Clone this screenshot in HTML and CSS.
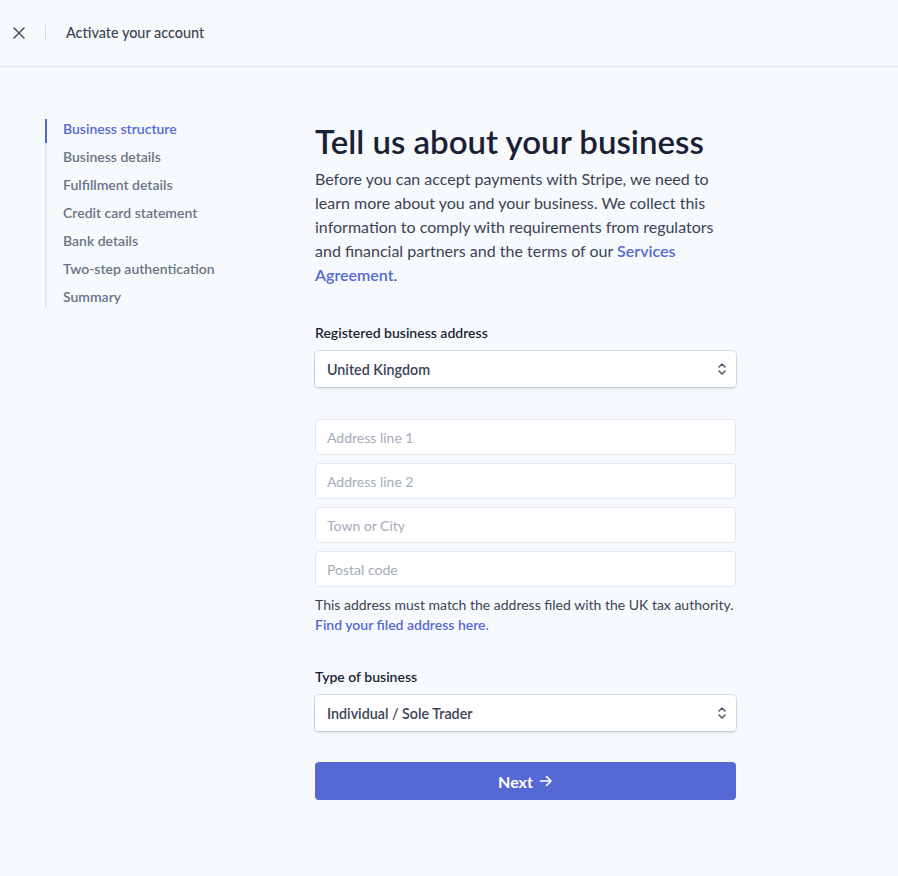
FILE: index.html
```html
<!DOCTYPE html>
<html lang="en">
<head>
<meta charset="utf-8">
<title>Activate your account</title>
<link rel="stylesheet" href="styles.css">
</head>
<body>
<header class="topbar">
  <button class="close" aria-label="Close">
    <svg width="12" height="12" viewBox="0 0 12 12"><path d="M1 1L11 11M11 1L1 11" stroke="#4f566b" stroke-width="1.6" stroke-linecap="round"/></svg>
  </button>
  <span class="divider"></span>
  <span class="title">Activate your account</span>
</header>
<div class="layout">
  <nav class="steps">
    <a class="step active">Business structure</a>
    <a class="step">Business details</a>
    <a class="step">Fulfillment details</a>
    <a class="step">Credit card statement</a>
    <a class="step">Bank details</a>
    <a class="step">Two-step authentication</a>
    <a class="step">Summary</a>
  </nav>
  <main class="content">
    <h1>Tell us about your business</h1>
    <p class="intro">Before you can accept payments with Stripe, we need to learn more about you and your business. We collect this information to comply with requirements from regulators and financial partners and the terms of our <a class="link">Services Agreement</a>.</p>

    <div class="field">
      <label class="label">Registered business address</label>
      <div class="select">
        <span>United Kingdom</span>
        <svg width="10" height="14" viewBox="0 0 10 14"><path d="M2 5L5 2L8 5M2 9L5 12L8 9" fill="none" stroke="#4f566b" stroke-width="1.5" stroke-linecap="round" stroke-linejoin="round"/></svg>
      </div>
    </div>

    <div class="inputs">
      <div class="input">Address line 1</div>
      <div class="input">Address line 2</div>
      <div class="input">Town or City</div>
      <div class="input">Postal code</div>
    </div>
    <p class="help">This address must match the address filed with the UK tax authority.<br><a class="link">Find your filed address here.</a></p>

    <div class="field field-type">
      <label class="label">Type of business</label>
      <div class="select">
        <span>Individual / Sole Trader</span>
        <svg width="10" height="14" viewBox="0 0 10 14"><path d="M2 5L5 2L8 5M2 9L5 12L8 9" fill="none" stroke="#4f566b" stroke-width="1.5" stroke-linecap="round" stroke-linejoin="round"/></svg>
      </div>
    </div>

    <button class="next">Next
      <svg width="14" height="14" viewBox="0 0 14 14"><path d="M1.5 7H12M7.5 2.5L12 7L7.5 11.5" fill="none" stroke="#fff" stroke-width="1.6" stroke-linecap="round" stroke-linejoin="round"/></svg>
    </button>
  </main>
</div>
</body>
</html>
```
FILE: styles.css
```css
* { box-sizing: border-box; }
html, body { margin: 0; padding: 0; }
body {
  background: #f7fafc;
  font-family: "Segoe UI", Lato, "Noto Sans", sans-serif;
  color: #3c4257;
  width: 898px;
  height: 876px;
  overflow: hidden;
}
.topbar {
  height: 67px;
  border-bottom: 1px solid #e3e8ee;
  display: flex;
  align-items: center;
  padding-bottom: 1px;
}
.close {
  background: none;
  border: 0;
  padding: 0;
  margin-left: 13px;
  width: 12px;
  height: 12px;
  display: flex;
}
.divider {
  width: 1px;
  height: 16px;
  background: #d5dbe1;
  margin-left: 20px;
}
.title {
  margin-left: 20px;
  font-size: 14.4px;
  font-weight: 500;
  color: #3c4257;
}
.layout {
  display: flex;
  padding-top: 52px;
}
.steps {
  margin-left: 45px;
  width: 270px;
  display: flex;
  flex-direction: column;
  align-self: flex-start;
}
.step {
  display: block;
  border-left: 2px solid #e3e8ee;
  padding-left: 16px;
  font-size: 14px;
  font-weight: 600;
  color: #697386;
  line-height: 20px;
  padding-top: 4px;
  padding-bottom: 4px;
}
.step:first-child { padding-top: 0; }
.step:last-child { padding-bottom: 0; }
.step.active {
  color: #5469d4;
  border-left-color: #5469d4;
}
.content {
  width: 421px;
}
h1 {
  margin: 0 0 4px;
  font-size: 33px;
  font-weight: 600;
  color: #1a1f36;
  line-height: 44px;
}
.intro {
  margin: 0;
  font-size: 16px;
  line-height: 24px;
  color: #3c4257;
}
.link {
  color: #5469d4;
  font-weight: 600;
}
.field { margin-top: 36px; }
.label {
  display: block;
  font-size: 14px;
  font-weight: 600;
  color: #1a1f36;
  line-height: 20px;
}
.select {
  margin-top: 8px;
  height: 36px;
  background: #fff;
  border-radius: 4px;
  box-shadow: 0 0 0 1px rgba(60,66,87,0.16), 0 2px 3px rgba(60,66,87,0.12);
  display: flex;
  align-items: center;
  justify-content: space-between;
  padding: 0 9px 0 12px;
  font-size: 14.3px;
  font-weight: 600;
  color: #3c4257;
}
.inputs {
  margin-top: 32px;
  display: flex;
  flex-direction: column;
  gap: 8px;
}
.input {
  height: 36px;
  background: #fff;
  border: 1px solid #e3e8ee;
  border-radius: 4px;
  display: flex;
  align-items: center;
  padding-left: 11px;
  font-size: 14px;
  color: #a3acb9;
}
.help {
  margin: 8px 0 0;
  font-size: 14px;
  line-height: 20px;
  color: #3c4257;
}
.field-type { margin-top: 32px; }
.next {
  margin-top: 31px;
  width: 100%;
  height: 38px;
  border: 0;
  border-radius: 4px;
  background: #5469d4;
  color: #fff;
  font-family: inherit;
  font-size: 16px;
  font-weight: 700;
  display: flex;
  align-items: center;
  justify-content: center;
  gap: 6px;
}
```
